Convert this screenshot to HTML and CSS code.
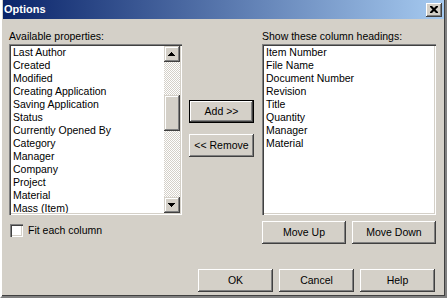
FILE: index.html
```html
<!DOCTYPE html>
<html>
<head>
<meta charset="utf-8">
<link rel="stylesheet" href="styles.css">
</head>
<body>
<div class="window">
  <div class="titlebar">
    <span class="title">Options</span>
    <span class="close"><svg width="8" height="7" viewBox="0 0 8 7"><path d="M0 0h2l2 2 2-2h2v1l-2.5 2.5 2.5 2.5v1h-2l-2-2-2 2h-2v-1l2.5-2.5-2.5-2.5z" fill="#000"/></svg></span>
  </div>
  <div class="body">
    <div class="top">
      <div class="col-left">
        <div class="label">Available properties:</div>
        <div class="listbox">
          <div class="items">
            <div class="item">Last Author</div>
            <div class="item">Created</div>
            <div class="item">Modified</div>
            <div class="item">Creating Application</div>
            <div class="item">Saving Application</div>
            <div class="item">Status</div>
            <div class="item">Currently Opened By</div>
            <div class="item">Category</div>
            <div class="item">Manager</div>
            <div class="item">Company</div>
            <div class="item">Project</div>
            <div class="item">Material</div>
            <div class="item">Mass (Item)</div>
          </div>
          <div class="scrollbar">
            <div class="sbtn"><svg width="7" height="4" viewBox="0 0 7 4"><path d="M3 0h1v1h1v1h1v1h1v1h-7v-1h1v-1h1v-1h1z" fill="#000"/></svg></div>
            <div class="track"><div class="thumb"></div></div>
            <div class="sbtn"><svg width="7" height="4" viewBox="0 0 7 4"><path d="M0 0h7v1h-1v1h-1v1h-1v1h-1v-1h-1v-1h-1v-1h-1z" fill="#000"/></svg></div>
          </div>
        </div>
      </div>
      <div class="col-mid">
        <div class="btn default">Add &gt;&gt;</div>
        <div class="btn">&lt;&lt; Remove</div>
      </div>
      <div class="col-right">
        <div class="label">Show these column headings:</div>
        <div class="listbox">
          <div class="items">
            <div class="item">Item Number</div>
            <div class="item">File Name</div>
            <div class="item">Document Number</div>
            <div class="item">Revision</div>
            <div class="item">Title</div>
            <div class="item">Quantity</div>
            <div class="item">Manager</div>
            <div class="item">Material</div>
          </div>
        </div>
      </div>
    </div>
    <div class="row3">
      <div class="check">
        <span class="box"></span>
        <span class="check-label">Fit each column</span>
      </div>
      <div class="move">
        <div class="btn wide">Move Up</div>
        <div class="btn wide">Move Down</div>
      </div>
    </div>
    <div class="footer">
      <div class="btn foot">OK</div>
      <div class="btn foot">Cancel</div>
      <div class="btn foot">Help</div>
    </div>
  </div>
</div>
</body>
</html>
```

FILE: styles.css
```css
html, body {
  margin: 0;
  padding: 0;
  background: #d4d0c8;
}
body {
  font-family: "Liberation Sans", Arial, sans-serif;
  font-size: 10.5px;
  line-height: 13px;
  color: #000;
}
.window {
  width: 447px;
  height: 298px;
  box-sizing: border-box;
  background: #d4d0c8;
  border-left: 2px solid #fff;
  border-right: 2px solid #808080;
  border-bottom: 2px solid #808080;
  box-shadow: inset -1px -1px 0 #404040;
  padding: 0 1px 1px 1px;
  display: flex;
  flex-direction: column;
}
.titlebar {
  height: 19px;
  background: linear-gradient(to right, #0a246a, #a6caf0);
  display: flex;
  align-items: center;
  justify-content: space-between;
  padding: 0 2px 0 1px;
  box-sizing: border-box;
}
.title {
  color: #fff;
  font-weight: bold;
  font-size: 11px;
}
.close {
  width: 16px;
  height: 14px;
  box-sizing: border-box;
  background: #d4d0c8;
  box-shadow: inset -1px -1px 0 #404040, inset 1px 1px 0 #fff, inset -2px -2px 0 #808080;
  display: flex;
  align-items: center;
  justify-content: center;
  padding-right: 1px;
}
.body {
  padding: 11px 8px 0 6px;
  display: flex;
  flex-direction: column;
}
.top {
  display: flex;
}
.col-left {
  width: 173px;
  margin-right: 7px;
}
.col-mid {
  width: 65px;
  margin-right: 8px;
  padding-top: 70px;
  display: flex;
  flex-direction: column;
  gap: 11px;
}
.col-right {
  width: 174px;
}
.label {
  height: 13px;
  margin-bottom: 1px;
  white-space: nowrap;
}
.listbox {
  height: 171px;
  box-sizing: border-box;
  background: #fff;
  box-shadow: inset 1px 1px 0 #808080, inset 2px 2px 0 #404040, inset -1px -1px 0 #fff, inset -2px -2px 0 #d4d0c8;
  padding: 2px;
  display: flex;
}
.items {
  flex: 1;
  padding: 0 0 0 2px;
  overflow: hidden;
  white-space: nowrap;
}
.item {
  height: 13px;
}
.scrollbar {
  width: 16px;
  display: flex;
  flex-direction: column;
}
.sbtn {
  height: 16px;
  flex: none;
  box-sizing: border-box;
  background: #d4d0c8;
  box-shadow: inset -1px -1px 0 #404040, inset 1px 1px 0 #d4d0c8, inset -2px -2px 0 #808080, inset 2px 2px 0 #fff;
  display: flex;
  align-items: center;
  justify-content: center;
  padding-right: 1px;
}
.track {
  flex: 1;
  background: repeating-conic-gradient(#fff 0 25%, #d4d0c8 0 50%) 0 0 / 2px 2px;
  padding-top: 33px;
}
.thumb {
  height: 36px;
  box-sizing: border-box;
  background: #d4d0c8;
  box-shadow: inset -1px -1px 0 #404040, inset 1px 1px 0 #d4d0c8, inset -2px -2px 0 #808080, inset 2px 2px 0 #fff;
}
.btn {
  height: 23px;
  box-sizing: border-box;
  background: #d4d0c8;
  box-shadow: inset -1px -1px 0 #404040, inset 1px 1px 0 #fff, inset -2px -2px 0 #808080;
  display: flex;
  align-items: center;
  justify-content: center;
  white-space: nowrap;
}
.btn.default {
  box-shadow: inset 0 0 0 1px #000, inset -2px -2px 0 #404040, inset 2px 2px 0 #fff, inset -3px -3px 0 #808080;
}
.row3 {
  margin-top: 6px;
  display: flex;
  justify-content: space-between;
}
.check {
  display: flex;
  align-items: flex-start;
  padding: 3px 0 0 1px;
}
.box {
  width: 13px;
  height: 13px;
  box-sizing: border-box;
  background: #fff;
  box-shadow: inset 1px 1px 0 #808080, inset 2px 2px 0 #404040, inset -1px -1px 0 #fff, inset -2px -2px 0 #d4d0c8;
  margin-right: 5px;
}
.check-label {
  line-height: 13px;
}
.move {
  display: flex;
  gap: 6px;
}
.btn.wide {
  width: 84px;
}
.footer {
  margin-top: 25px;
  display: flex;
  justify-content: flex-end;
  gap: 6px;
  padding-right: 1px;
}
.btn.foot {
  width: 75px;
}
```
